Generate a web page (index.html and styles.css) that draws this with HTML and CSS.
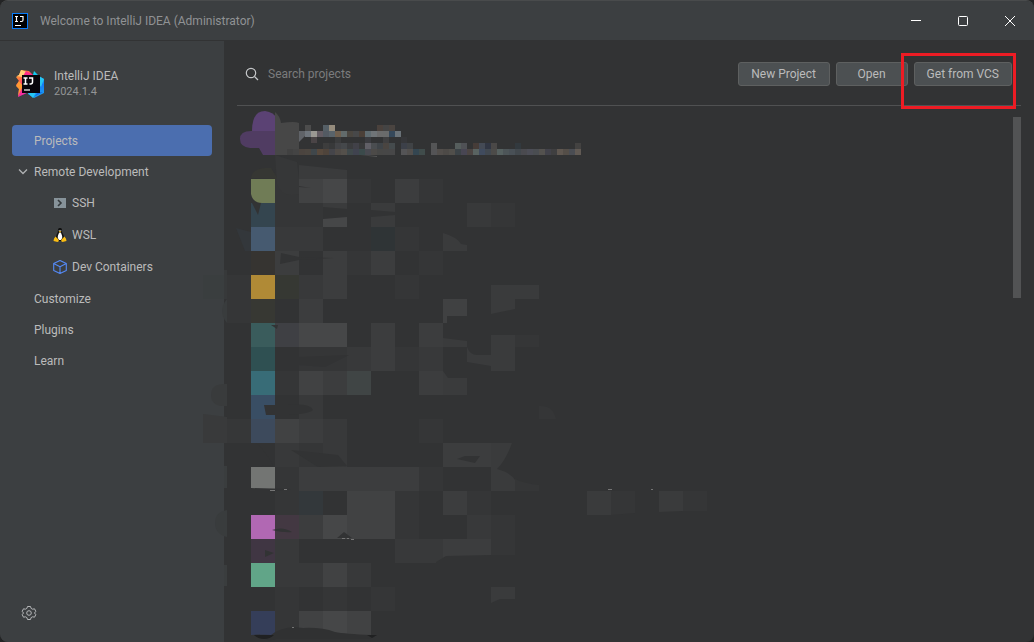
FILE: index.html
```html
<!DOCTYPE html>
<html lang="en">
<head>
<meta charset="utf-8">
<title>Welcome to IntelliJ IDEA</title>
<link rel="stylesheet" href="styles.css">
</head>
<body>
<div class="window">
  <header class="titlebar">
    <svg class="app-icon" viewBox="0 0 16 16" width="16" height="16" aria-hidden="true">
      <rect x=".5" y=".5" width="15" height="15" fill="#000" stroke="#087cfa"/>
      <path d="M3 3.500h3M4.500 3.500v5M3 8.500h3M8 3.500h3v3.500q0 1.500-1.500 1.500h-1.500" fill="none" stroke="#fff" stroke-width="1.200"/>
      <path d="M3 12.500h6" stroke="#fff" stroke-width="1.200"/>
    </svg>
    <h1 class="title">Welcome to IntelliJ IDEA (Administrator)</h1>
    <div class="controls">
      <button class="control" aria-label="Minimize"><svg viewBox="0 0 12 12" width="12" height="12"><path d="M1 5.500h10"/></svg></button>
      <button class="control" aria-label="Maximize"><svg viewBox="0 0 12 12" width="12" height="12"><rect x="1.500" y="1.500" width="9" height="9" rx="1"/></svg></button>
      <button class="control" aria-label="Close"><svg viewBox="0 0 12 12" width="12" height="12"><path d="M1 1l10 10M11 1L1 11"/></svg></button>
    </div>
  </header>
  <div class="body">
    <aside class="sidebar">
      <div class="product">
        <svg viewBox="0 0 28 28" width="28" height="28" aria-hidden="true">
          <defs>
            <linearGradient id="warm" x1="0" y1="0" x2=".6" y2="1"><stop offset="0" stop-color="#ffd23a"/><stop offset=".3" stop-color="#ff7a3d"/><stop offset=".55" stop-color="#ff2f78"/><stop offset="1" stop-color="#e92cc0"/></linearGradient>
            <linearGradient id="cool" x1="0" y1="0" x2="0" y2="1"><stop offset="0" stop-color="#12dcef"/><stop offset=".5" stop-color="#1679f5"/><stop offset="1" stop-color="#1ba9f2"/></linearGradient>
          </defs>
          <path d="M5 0l8 1 5 5-5 16-11 5 1-8-3-4 3-4-3-4 3-2z" fill="url(#warm)"/>
          <path d="M5 0l6 2-5 5-5-1 2-1z" fill="#ffcf78"/>
          <path d="M3 11l4 5-5 10 1-7-3-3z" fill="#ff9b32"/>
          <path d="M10 1l7 4-5 3-5-2z" fill="#ff2c8a"/>
          <path d="M18 1l5 5 5 3v14l-10 5-6-4z" fill="url(#cool)"/>
          <path d="M22 6l6 3-3 8-3-4zM12 23l8-1-3 6z" fill="#27c6f4"/>
          <path d="M22 22l5 0-9 5z" fill="#156de7"/>
          <path d="M6 5h18v18H6z" fill="#08050b"/>
          <path d="M7.500 8h4M9.500 8v6M7.500 14h4M13 8h3.500v4q0 2-2 2h-1" fill="none" stroke="#fff" stroke-width="1.500"/>
          <path d="M8 20h6" stroke="#ccc" stroke-width="1.500"/>
        </svg>
        <div><div class="product-name">IntelliJ IDEA</div><div class="product-version">2024.1.4</div></div>
      </div>
      <nav class="nav">
        <a class="item selected" href="#projects">Projects</a>
        <a class="item branch" href="#remote"><svg viewBox="0 0 10 8" width="10" height="8" aria-hidden="true"><path d="M1 1.500l4 4 4-4" fill="none" stroke="#afb1b3" stroke-width="1.300"/></svg>Remote Development</a>
        <a class="item child" href="#ssh"><svg viewBox="0 0 14 14" width="14" height="14" aria-hidden="true"><path d="M1 2h12v10H1z" fill="#87939a"/><path d="M5 4l3 3-3 3" fill="none" stroke="#34393c" stroke-width="1.600"/></svg>SSH</a>
        <a class="item child" href="#wsl"><svg viewBox="0 0 14 14" width="14" height="14" aria-hidden="true">
          <path d="M7 0C4.800 0 4.800 2 4.900 4 4.500 5.700 2.500 7.500 3 11l2 2h4l2-2c.5-3.500-1.500-5.300-1.900-7C9.200 2 9.200 0 7 0z" fill="#111"/>
          <path d="M7 4C5.500 5.500 4.500 7.500 4.800 10l1.200 2h2l1.200-2C9.500 7.500 8.500 5.500 7 4z" fill="#fff"/>
          <path d="M5.700 3.400L7 2.900l1.400.5L7 4.700z" fill="#f8be24"/><path d="M5.800 2h.8v1h-.8zM7.400 2h.8v1h-.8z" fill="#ddd"/>
          <path d="M2.500 8.500L5 11l1 2-1.500 1L.5 13l.5-2.300zM11.500 8.500L9 11l-1 2 1.500 1 4-1-.5-2.300z" fill="#fbbd12"/></svg>WSL</a>
        <a class="item child" href="#containers"><svg viewBox="0 0 14 14" width="14" height="14" aria-hidden="true"><path d="M7 .6l6.300 3v6.800l-6.300 3-6.300-3V3.600zM.7 3.600L7 6.700l6.300-3.100M7 6.700v6.700" fill="none" stroke="#548af7" stroke-width="1.100" stroke-linejoin="round"/></svg>Dev Containers</a>
        <a class="item" href="#customize">Customize</a>
        <a class="item" href="#plugins">Plugins</a>
        <a class="item" href="#learn">Learn</a>
      </nav>
      <button class="settings" aria-label="Settings"><svg viewBox="0 0 16 16" width="16" height="16"><path d="M6.500 1.500h3l.6 1.900 1.500.8 1.900-.4 1.300 2.500L13.500 8l1.300 1.700-1.300 2.500-1.900-.4-1.500.8-.6 1.900h-3l-.6-1.900-1.500-.8-1.900.4-1.300-2.500L2.500 8 1.200 6.300l1.300-2.500 1.900.4 1.500-.8z"/><circle cx="8" cy="8" r="2.300"/></svg></button>
    </aside>
    <main class="main">
      <div class="toolbar">
        <label class="search"><svg viewBox="0 0 14 14" width="14" height="14" aria-hidden="true"><circle cx="6" cy="6" r="4.700"/><path d="M9.500 9.500l3.500 3.500"/></svg><input type="text" placeholder="Search projects" aria-label="Search projects"></label>
        <div class="actions">
          <button class="button wide">New Project</button>
          <button class="button">Open</button>
          <div class="marked"><button class="button wide">Get from VCS</button><span class="marker"></span></div>
        </div>
      </div>
      <div class="list"><div class="thumb"></div></div>
    </main>
    <svg class="mosaic" viewBox="200 106 520 536" width="520" height="536" aria-hidden="true">
      <g>
        <path d="M203 275h24v24h-24z" fill="#3a3e3f"/>
        <path d="M224 270h3v29h-3z" fill="#37393a"/>
        <path d="M227 299v24q-5-6-5-12t5-12z" fill="#393c3d"/>
        <path d="M227 299h24v24h-24zM227 275h24v24h-24z" fill="#353637"/>
        <path d="M227 384q-16-1-16 11t16 11z" fill="#393b3c"/>
        <path d="M203 414l24 3v26h-24z" fill="#393a3b"/>
        <path d="M227 419h24v24h-24z" fill="#363738"/>
        <path d="M224 466h3v22h-3zM224 565h3v21h-3z" fill="#3a3d3e"/>
        <path d="M227 510q-12 2-12 13t12 14z" fill="#393c3d"/>
      </g>
      <g id="cells" shape-rendering="crispEdges"></g>
      <g fill="#323334">
        <path d="M251 194q2 9 11 9h-11zM252 203l6 12 3-12zM271 325h7l-1 4z"/>
        <path d="M281 253l18 4 35 1-35 2-19 4zM299 357l50-2-24 12-26-2z"/>
        <path d="M264 405h24q22-2 25 5-4 4-25 5h-22z"/>
        <path d="M227 443h29q8 6 17 22l-22 2h-24zM291 450l47 5 9 11-29 1z"/>
        <path d="M251 488l40 1-16 2h-24zM272 530q11-4 20 2-7 1-20-2zM265 550l9 3-9 4zM337 538l7-6 8 6z"/>
        <path d="M299 186l12 2-12-1z"/>
      </g>
      <g fill="#3a3b3c">
        <path d="M443 233q14 4 18 11l6 1v6h-24z"/>
        <path d="M323 203h24v6l-24-2zM371 203h24v9l-24-2zM371 217l24-2v12h-24zM299 165l48 5v9h-48z"/>
        <path d="M491 285h48v14h-24v10l-24 5z"/>
        <path d="M443 338l24 3v6h-24zM467 347q3 8 10 8h14v11l-24-4zM491 335h24v36h-24z"/>
        <path d="M443 371l5 7h19v17h-24z"/>
        <path d="M491 443h21q-6 17-15 26 14 4 18 11v11h-24z"/>
        <path d="M491 587h24v12h-15l-9 4z"/>
      </g>
      <path d="M323 219l24-2v10h-24z" fill="#464748"/>
      <path d="M515 479q8 4 24 6v6h-24zM515 335h24v12h-24zM539 406q14-1 17 13h-17z" fill="#353637"/>
      <path d="M443 299h24v17h-20v7h-4z" fill="#404142"/>
      <path d="M436 562l10-6 45-1h24v8h-79z" fill="#323334"/>
      <path d="M457 459l8-3h15l-5 7z" fill="#323334"/>
      <path d="M587 491h24v24h-24zM659 491h24v20l-24 1z" fill="#3a3b3c"/>
      <path d="M611 491h24v22l-24 2zM683 491h24v20h-24z" fill="#353637"/>
      <path d="M251 178q1-9 14-10h6l7 11z" fill="#363733"/>
      <path d="M275 155l22 7 2 17v15q-18 4-22-10z" fill="#363738"/>
      <path d="M236 228l15 4v19h-6z" fill="#33373b"/>
      <path d="M252 131q0-20 13-20 9 1 12 8v12z" fill="#5b4274"/>
      <path d="M251 131h24v24h-12l-4-7h-9q-10-1-10-9 0-8 11-8z" fill="#503c62"/>
      <path d="M275 112q5 4 6 11 14-2 18 0v32h-24z" fill="#474747"/>
      <path d="M299 131h6v5l-6 6z" fill="#606368"/>
      <g id="pixels" shape-rendering="crispEdges"></g>
      <path d="M360 155l17 1v1z" fill="#555"/>
      <path d="M251 634l20 1q13-10 32-7 18-1 32 4 10 2 36 3h6l-5 3-2 1h-94q-8 3-12-1-4-4-4-4z" fill="#303132"/>
      <path d="M254 635h20q-4 4-10 4t-10-4zM367 635h10l-5 3z" fill="#202122"/>
      <path d="M270 490.500h5M284 489.500h3M608 489.500h4M651 489.500h2M342 538.500h3M347 538.500h2M351 539.500h3M292 627.500h2" stroke="#757575"/>
    </svg>
  </div>
</div>
<script src="script.js"></script>
</body>
</html>
```
FILE: styles.css
```css
* { box-sizing: border-box; }
body {
  margin: 0;
  background: #232425;
  color: #bbbbbb;
  font: 12px/16px Roboto, "Noto Sans", sans-serif;
}
button, input { font: inherit; color: inherit; }
.window {
  display: flex;
  flex-direction: column;
  min-height: 100vh;
  overflow: hidden;
  background: #323334;
  border-top: 1px solid #494b4c;
  border-radius: 8px;
}
.titlebar {
  display: flex;
  align-items: center;
  height: 40px;
  padding-left: 12px;
  background: #3c3f41;
  border-bottom: 1px solid #323334;
}
.title { flex: 1; margin: 0 0 0 12px; font-size: 12px; font-weight: 400; color: #909294; }
.controls { display: flex; padding-right: 1px; }
.control {
  display: grid;
  place-items: center;
  width: 47px;
  height: 38px;
  padding: 0;
  border: 0;
  background: none;
}
.control svg { fill: none; stroke: #fff; }
.body { position: relative; display: flex; flex: 1; }
.sidebar {
  display: flex;
  flex-direction: column;
  width: 224px;
  padding: 28px 12px 21px;
  background: #3c3f41;
}
.product { display: flex; align-items: center; gap: 10px; padding-left: 4px; line-height: 15px; }
.product-version { color: #939596; font-size: 11px; }
.nav { display: flex; flex-direction: column; margin-top: 26px; }
.item {
  display: flex;
  align-items: center;
  height: 31px;
  padding-left: 22px;
  border-radius: 4px;
  color: #bbbbbb;
  text-decoration: none;
}
.selected { background: #4b6eaf; }
.branch { gap: 6px; padding-left: 6px; }
.child { gap: 5px; height: 32px; padding-left: 41px; }
.settings { margin-top: auto; padding: 0; margin-left: 9px; width: 16px; height: 16px; border: 0; background: none; }
.settings svg { display: block; fill: none; stroke: #b5b7b9; }
.main { display: flex; flex: 1; flex-direction: column; padding: 0 13px; }
.toolbar {
  display: flex;
  align-items: center;
  justify-content: space-between;
  height: 65px;
  padding: 2px 9px 0 8px;
  border-bottom: 1px solid #505152;
}
.search { display: flex; align-items: center; gap: 9px; flex: 1; }
.search svg { fill: none; stroke: #c4c6c8; stroke-width: 1.2; }
.search input { flex: 1; min-width: 0; padding: 0; border: 0; outline: 0; background: none; }
.search input::placeholder { color: #7b7c7d; opacity: 1; }
.actions { display: flex; gap: 6px; }
.button {
  height: 24px;
  min-width: 72px;
  padding: 0 12px;
  border: 1px solid #5e6060;
  border-radius: 3px;
  background: #4c5052;
  white-space: nowrap;
}
.wide { min-width: 92px; }
.marked { position: relative; }
.marker { position: absolute; inset: -9px -4px -23px -13px; border: 3px solid #ed1c24; pointer-events: none; }
.list { display: flex; justify-content: flex-end; flex: 1; padding-top: 11px; }
.thumb { width: 8px; height: 181px; background: #525354; }
.mosaic { position: absolute; left: 200px; top: 65px; pointer-events: none; }
```
FILE: script.js
```js
const NS = 'http://www.w3.org/2000/svg';

function square(parent, x, y, size, fill) {
  const rect = document.createElementNS(NS, 'rect');
  rect.setAttribute('x', x);
  rect.setAttribute('y', y);
  rect.setAttribute('width', size);
  rect.setAttribute('height', size);
  rect.setAttribute('fill', fill);
  parent.appendChild(rect);
}

// Large cells: one character per column, first colour listed separately.
const shades = { 1: '#353637', 2: '#38393a', 3: '#3c3d3e', 4: '#414243', 5: '#464748',
  b: '#2f3436', g: '#363833', p: '#433842', t: '#404545', n: '#33383b', v: '#3f4044' };
const rows = [
  ['#707c56', '14510310'],
  ['#34454f', '1100000021'],
  ['#465a70', '2200b100'],
  ['#363431', '30313010'],
  ['#b08a36', 'g2300100'],
  ['#373833', '03000000'],
  ['#3a5c5c', 'v55030300'],
  ['#2f5052', '011231200'],
  ['#386c77', '143t0030'],
  ['#394e64', '02000000'],
  ['#3d4a5c', '43200010'],
  ['#323334', '212000033'],
  ['#737573', '133333100'],
  ['#323334', '1n0441031'],
  ['#b168b3', 'p3544100210'],
  ['#403643', '2000022331'],
  ['#61a588', '22420000'],
  ['#323334', '10101000'],
  ['#353e59', '14540000']
];
const cells = document.getElementById('cells');
rows.forEach(([first, rest], r) => {
  square(cells, 251, 179 + r * 24, 24, first);
  [...rest].forEach((c, i) => {
    if (shades[c]) square(cells, 275 + i * 24, 179 + r * 24, 24, shades[c]);
  });
});

// Small cells over the first list entry: x, y, run of colours.
const runs = [
  [305, 125, '4c4c4c'], [323, 125, '555f66 958c7d'], [377, 125, '4a413c 444444 4a4440'],
  [305, 131, '6f757c 9a9892 635b62 535a62 59636a 6f5f4e 626b6b 4a4640 474849 4b4038 5f6b70 6f7477 6b6b6b 6a6b6b 35485a 6a7278'],
  [311, 137, '4a4446'], [335, 137, '3b3c3d'], [365, 137, '3b3c40'], [383, 137, '3f3f40'], [401, 137, '36373a'],
  [323, 143, '3d3d3d 38393a 434447 45484b 3b3c3e 414148 38393a 605f66 4a4d50 3f4448 4a4541 454b4d 323334 3c4049 404346'],
  [431, 143, '545556'], [455, 143, '555d5c 4f5155'], [473, 143, '463c38 444a55 313643 4a4847'], [515, 143, '32393e'], [575, 143, '434241'],
  [287, 149, '414141 444444 4b443f 4c4640 40474b 57493d 4f443b 45454a 504b47 54504b 40494b 40434f 3b4a4b 484950 4c4a48 474746 474747 474748'],
  [401, 149, '545456 524f4d 344651 404c4b'],
  [431, 149, '545456 524e4b 4d4a47 514f4b 3c4347 484653 4c4543 596361 404b5e 414850 4c4b49 566160 4d5558 495056 42484d 4a4a4f 4c4d56 4a4d51 54524f 42424a 3f3f40 5f5750 544e48 4a4d53 615a54']
];
const pixels = document.getElementById('pixels');
runs.forEach(([x, y, colours]) => {
  colours.split(' ').forEach((c, i) => square(pixels, x + i * 6, y, 6, '#' + c));
});
```
